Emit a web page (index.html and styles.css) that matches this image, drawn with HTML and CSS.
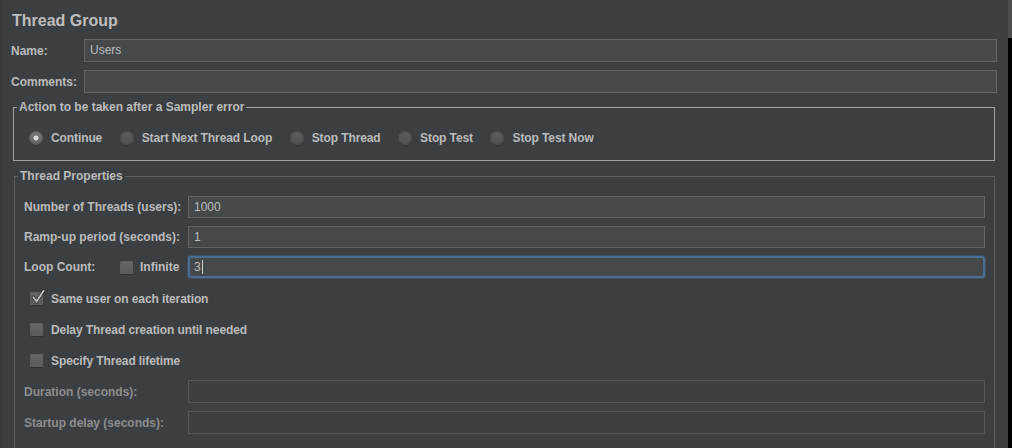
FILE: index.html
```html
<!DOCTYPE html>
<html>
<head>
<meta charset="utf-8">
<link rel="stylesheet" href="styles.css">
</head>
<body>
<div class="app">
  <div class="edge"></div>
  <main class="panel">
    <h1 class="title">Thread Group</h1>
    <div class="top-row name-row"><span class="top-lbl">Name:</span><div class="field">Users</div></div>
    <div class="top-row comments-row"><span class="top-lbl">Comments:</span><div class="field"></div></div>

    <fieldset class="group action">
      <legend>Action to be taken after a Sampler error</legend>
      <div class="radios">
        <span class="opt"><span class="radio on"></span>Continue</span>
        <span class="opt"><span class="radio"></span>Start Next Thread Loop</span>
        <span class="opt"><span class="radio"></span>Stop Thread</span>
        <span class="opt"><span class="radio"></span>Stop Test</span>
        <span class="opt"><span class="radio"></span>Stop Test Now</span>
      </div>
    </fieldset>

    <fieldset class="group props">
      <legend>Thread Properties</legend>
      <div class="props-body">
        <div class="frow"><span class="flabel">Number of Threads (users):</span><div class="field">1000</div></div>
        <div class="frow"><span class="flabel">Ramp-up period (seconds):</span><div class="field">1</div></div>
        <div class="frow">
          <span class="flabel loop"><span class="loop-text">Loop Count:</span><span class="cb"></span><span class="inf">Infinite</span></span>
          <div class="field focus">3<span class="caret"></span></div>
        </div>
        <div class="crow first">
          <span class="cb checked"><svg class="tick" viewBox="0 0 16 16" width="16" height="16"><path d="M3.5 8.5 L6.5 12.5 L13.5 2" fill="none" stroke="#2e3032" stroke-width="3.2" stroke-linecap="square"/><path d="M3.5 8.5 L6.5 12.5 L13.5 2" fill="none" stroke="#c4c4c4" stroke-width="1.7" stroke-linecap="square"/></svg></span>
          <span>Same user on each iteration</span>
        </div>
        <div class="crow"><span class="cb"></span><span>Delay Thread creation until needed</span></div>
        <div class="crow"><span class="cb"></span><span>Specify Thread lifetime</span></div>
        <div class="frow tall"><span class="flabel disabled">Duration (seconds):</span><div class="field disabled"></div></div>
        <div class="frow tall"><span class="flabel disabled">Startup delay (seconds):</span><div class="field disabled"></div></div>
      </div>
    </fieldset>
  </main>
  <div class="scroll"><div class="thumb"></div></div>
</div>
</body>
</html>
```

FILE: styles.css
```css
* { box-sizing: border-box; }

html, body {
  margin: 0;
  padding: 0;
}

body {
  background: #3c3f41;
  font-family: "Liberation Sans", Arial, sans-serif;
  font-size: 12px;
  color: #bbbbbb;
  overflow: hidden;
}

.app {
  display: flex;
  width: 1012px;
  height: 448px;
  overflow: hidden;
}

.edge {
  flex: none;
  width: 2px;
  background: #37393b;
}

.panel {
  flex: 1;
  min-width: 0;
  display: flex;
  flex-direction: column;
  padding: 12px 11px 0 9px;
}

.title {
  margin: 0;
  padding-left: 1px;
  font-size: 16px;
  line-height: 18px;
  font-weight: bold;
  color: #bdbdbd;
}

.top-row {
  display: flex;
  align-items: center;
  height: 23px;
  flex: none;
}

.name-row { margin-top: 9px; }
.comments-row { margin-top: 8px; }

.top-lbl {
  flex: none;
  width: 73px;
  font-weight: bold;
}

.field {
  flex: 1;
  height: 100%;
  border: 1px solid #636567;
  background: #45494a;
  padding: 0 5px;
  line-height: 21px;
  color: #bdbdbd;
  white-space: nowrap;
}

.group {
  margin: 0;
  padding: 0;
  min-width: 0;
  flex: none;
}

.group legend {
  margin-left: 3px;
  padding: 0 2px;
  font-weight: bold;
  font-size: 12px;
  line-height: 14px;
  color: #bbbbbb;
}

.action {
  margin: 7px 2px 0 2px;
  border: 1px solid #a2a2a2;
}

.radios {
  display: flex;
  align-items: center;
  gap: 17.5px;
  padding: 15px 0 13px 15px;
}

.opt {
  display: flex;
  align-items: center;
  gap: 8px;
  font-weight: bold;
  line-height: 18px;
  letter-spacing: -0.1px;
  white-space: nowrap;
}

.radio {
  flex: none;
  width: 14px;
  height: 14px;
  border-radius: 50%;
  background: linear-gradient(#5c5f61, #4f5254);
  box-shadow: inset 0 0 0 1px #47494b, 0 1px 0 #333537;
}

.radio.on {
  background:
    radial-gradient(circle at 50% 50%, #d8d8d8 0, #d8d8d8 2.2px, rgba(216,216,216,0) 2.8px),
    linear-gradient(#7a7d7f, #606365);
  box-shadow: inset 0 0 0 1px #56595b, 0 1px 0 #333537;
}

.props {
  margin: 8px 2px 0 3px;
  border: 1px solid #5e6163;
  padding-bottom: 60px;
}

.props-body {
  display: flex;
  flex-direction: column;
  gap: 8px;
  padding: 13px 9px 0 9px;
}

.frow {
  display: flex;
  align-items: center;
  height: 22px;
  flex: none;
}

.frow .field {
  line-height: 20px;
}

.frow.tall {
  height: 23px;
}

.flabel {
  flex: none;
  width: 164px;
  font-weight: bold;
  white-space: nowrap;
}

.flabel.disabled {
  color: #8d8d8d;
}

.flabel.loop {
  display: flex;
  align-items: center;
}

.loop-text {
  width: 96px;
  flex: none;
}

.inf {
  margin-left: 7px;
}

.field.focus {
  border: 2px solid #4a6d95;
  border-radius: 3px;
  padding-left: 4px;
  line-height: 18px;
  box-shadow: 0 0 0 1px rgba(74, 109, 149, 0.35);
}

.caret {
  display: inline-block;
  width: 1px;
  height: 14px;
  margin-left: 1px;
  background: #d0d0d0;
  vertical-align: -3px;
}

.field.disabled {
  background: transparent;
  border-color: #54575a;
}

.crow {
  display: flex;
  align-items: center;
  gap: 8px;
  height: 23px;
  padding-left: 6px;
  font-weight: bold;
  letter-spacing: -0.1px;
  flex: none;
}

.crow.first {
  margin-top: 1px;
}

.cb {
  flex: none;
  position: relative;
  width: 13px;
  height: 13px;
  border-radius: 2px;
  background: linear-gradient(#65686a, #585b5d);
  box-shadow: inset 0 0 0 1px #5c5f61, 0 1px 0 #2f3133;
}

.tick {
  position: absolute;
  left: 0;
  top: -3px;
  overflow: visible;
}

.scroll {
  flex: none;
  width: 4px;
  background: #000000;
}

.thumb {
  height: 38px;
  background: #4a4d50;
}
```
